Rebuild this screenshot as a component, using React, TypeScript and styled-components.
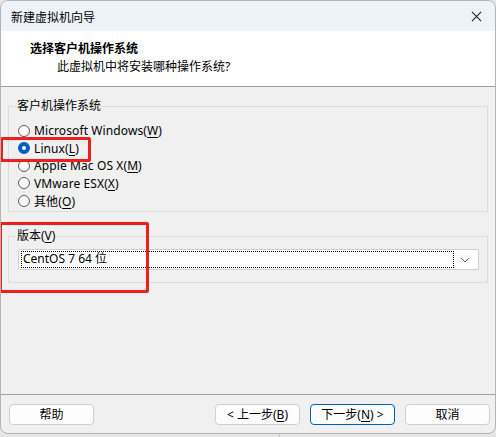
import React from 'react';
import styled, { createGlobalStyle } from 'styled-components';

const GlobalStyle = createGlobalStyle`
  html, body {
    margin: 0;
    padding: 0;
    background: #e6e6e6;
    overflow: hidden;
  }
  body {
    font-family: 'Noto Sans', 'Noto Sans CJK SC', sans-serif;
    font-size: 12px;
    color: #000;
  }
`;

const osList = [
  { label: 'Microsoft Windows', key: 'W' },
  { label: 'Linux', key: 'L' },
  { label: 'Apple Mac OS X', key: 'M' },
  { label: 'VMware ESX', key: 'X' },
  { label: '其他', key: 'O' },
];

export default function App() {
  return (
    <>
      <GlobalStyle />
      <Screen>
        <Window>
          <TitleBar>
            <TitleText>新建虚拟机向导</TitleText>
            <CloseIcon viewBox="0 0 12 12">
              <path d="M1 1 L11 11 M11 1 L1 11" stroke="#1a1a1a" strokeWidth="1.1" />
            </CloseIcon>
          </TitleBar>
          <Header>
            <Heading>选择客户机操作系统</Heading>
            <SubHeading>此虚拟机中将安装哪种操作系统?</SubHeading>
          </Header>
          <Body>
            <GroupBox $height={113}>
              <Legend>客户机操作系统</Legend>
              <RadioList>
                {osList.map((os) => (
                  <RadioRow key={os.key}>
                    <RadioCircle $checked={os.key === 'L'} />
                    <span>
                      {os.label}(<u>{os.key}</u>)
                    </span>
                  </RadioRow>
                ))}
              </RadioList>
              <Highlight $top={24} $left={-9} $width={91} $height={25} />
            </GroupBox>
            <GroupBox $height={54}>
              <Legend>
                版本(<u>V</u>)
              </Legend>
              <Select>
                <FocusText>CentOS 7 64 位</FocusText>
                <Chevron viewBox="0 0 10 6">
                  <path d="M1 1 L5 5 L9 1" fill="none" stroke="#606060" strokeWidth="1" />
                </Chevron>
              </Select>
              <Highlight $top={-21} $left={-10} $width={150} $height={71} />
            </GroupBox>
          </Body>
          <Footer>
            <Button>帮助</Button>
            <Spacer />
            <Button>
              &lt; 上一步(<u>B</u>)
            </Button>
            <Button $primary>
              下一步(<u>N</u>) &gt;
            </Button>
            <Button>取消</Button>
          </Footer>
        </Window>
        <BehindStrip>
          <BehindText>高级设置向导</BehindText>
        </BehindStrip>
      </Screen>
    </>
  );
}

const Screen = styled.div`
  width: 496px;
  height: 437px;
  position: relative;
  overflow: hidden;
`;

const Window = styled.div`
  position: relative;
  z-index: 1;
  width: 494px;
  height: 432px;
  border: 1px solid #b4b4b4;
  border-radius: 8px;
  background: #f0f0f0;
  overflow: hidden;
  display: flex;
  flex-direction: column;
`;

const TitleBar = styled.div`
  height: 30px;
  background: #eef2f9;
  display: flex;
  align-items: center;
  justify-content: space-between;
  padding: 0 13px 0 10px;
`;

const TitleText = styled.span`
  font-size: 12px;
  margin-top: 1px;
`;

const CloseIcon = styled.svg`
  width: 11px;
  height: 11px;
`;

const Header = styled.div`
  height: 56px;
  background: #fff;
  border-bottom: 1px solid #a0a0a0;
  padding: 10px 0 0 29px;
  box-sizing: border-box;
`;

const Heading = styled.div`
  font-weight: bold;
  font-size: 12px;
  line-height: 16px;
`;

const SubHeading = styled.div`
  margin: 2px 0 0 27px;
  line-height: 16px;
`;

const Body = styled.div`
  flex: 1;
  padding: 12px 7px 0 7px;
  display: flex;
  flex-direction: column;
  gap: 17px;
`;

const GroupBox = styled.fieldset<{ $height: number }>`
  position: relative;
  margin: 0;
  height: ${(p) => p.$height}px;
  border: 1px solid #dcdcdc;
  border-radius: 0;
  padding: 0 8px 0 9px;
  box-sizing: border-box;
`;

const Legend = styled.legend`
  padding: 0 1px;
  margin-left: -2px;
  line-height: 14px;
  u {
    text-underline-offset: 2px;
  }
`;

const RadioList = styled.div`
  display: flex;
  flex-direction: column;
  margin-top: 9px;
`;

const RadioRow = styled.label`
  display: flex;
  align-items: center;
  gap: 4px;
  height: 17.5px;
  letter-spacing: 0.1px;
  u {
    text-underline-offset: 2px;
  }
`;

const RadioCircle = styled.span<{ $checked?: boolean }>`
  width: 12px;
  height: 12px;
  border-radius: 50%;
  box-sizing: border-box;
  border: ${(p) => (p.$checked ? '4px solid #005fb8' : '1px solid #5a5a5a')};
  background: #fff;
  flex-shrink: 0;
`;

const Highlight = styled.div<{ $top: number; $left: number; $width: number; $height: number }>`
  position: absolute;
  top: ${(p) => p.$top}px;
  left: ${(p) => p.$left}px;
  width: ${(p) => p.$width}px;
  height: ${(p) => p.$height}px;
  border: 3px solid #f01e1e;
  border-radius: 2px;
  box-sizing: border-box;
  pointer-events: none;
`;

const Select = styled.div`
  margin-top: 6px;
  height: 21px;
  background: #fff;
  border: 1px solid #d0d0d0;
  border-radius: 2px;
  box-sizing: border-box;
  display: flex;
  align-items: center;
  padding: 0 8px 0 2px;
  gap: 6px;
`;

const FocusText = styled.div`
  flex: 1;
  height: 15px;
  border: 1px dotted #000;
  line-height: 14px;
  padding-left: 1px;
`;

const Chevron = styled.svg`
  width: 10px;
  height: 6px;
`;

const Footer = styled.div`
  height: 39px;
  border-top: 1px solid #a0a0a0;
  display: flex;
  align-items: flex-start;
  padding: 9px 5px 0 8px;
  gap: 10px;
  box-sizing: border-box;
`;

const Spacer = styled.div`
  flex: 1;
`;

const Button = styled.div<{ $primary?: boolean }>`
  width: 85px;
  height: 21px;
  box-sizing: border-box;
  background: #fdfdfd;
  border: 1px solid ${(p) => (p.$primary ? '#005fb8' : '#cfcfcf')};
  border-radius: 4px;
  display: flex;
  align-items: center;
  justify-content: center;
  line-height: 1;
  u {
    text-underline-offset: 2px;
  }
`;

const BehindStrip = styled.div`
  position: absolute;
  left: 279px;
  top: 420px;
  width: 217px;
  height: 17px;
  border-left: 1px solid #c8c8c8;
  overflow: hidden;
`;

const BehindText = styled.div`
  position: absolute;
  left: 30px;
  top: 14px;
  color: #2b3a8c;
  font-size: 16px;
  letter-spacing: 2px;
`;
